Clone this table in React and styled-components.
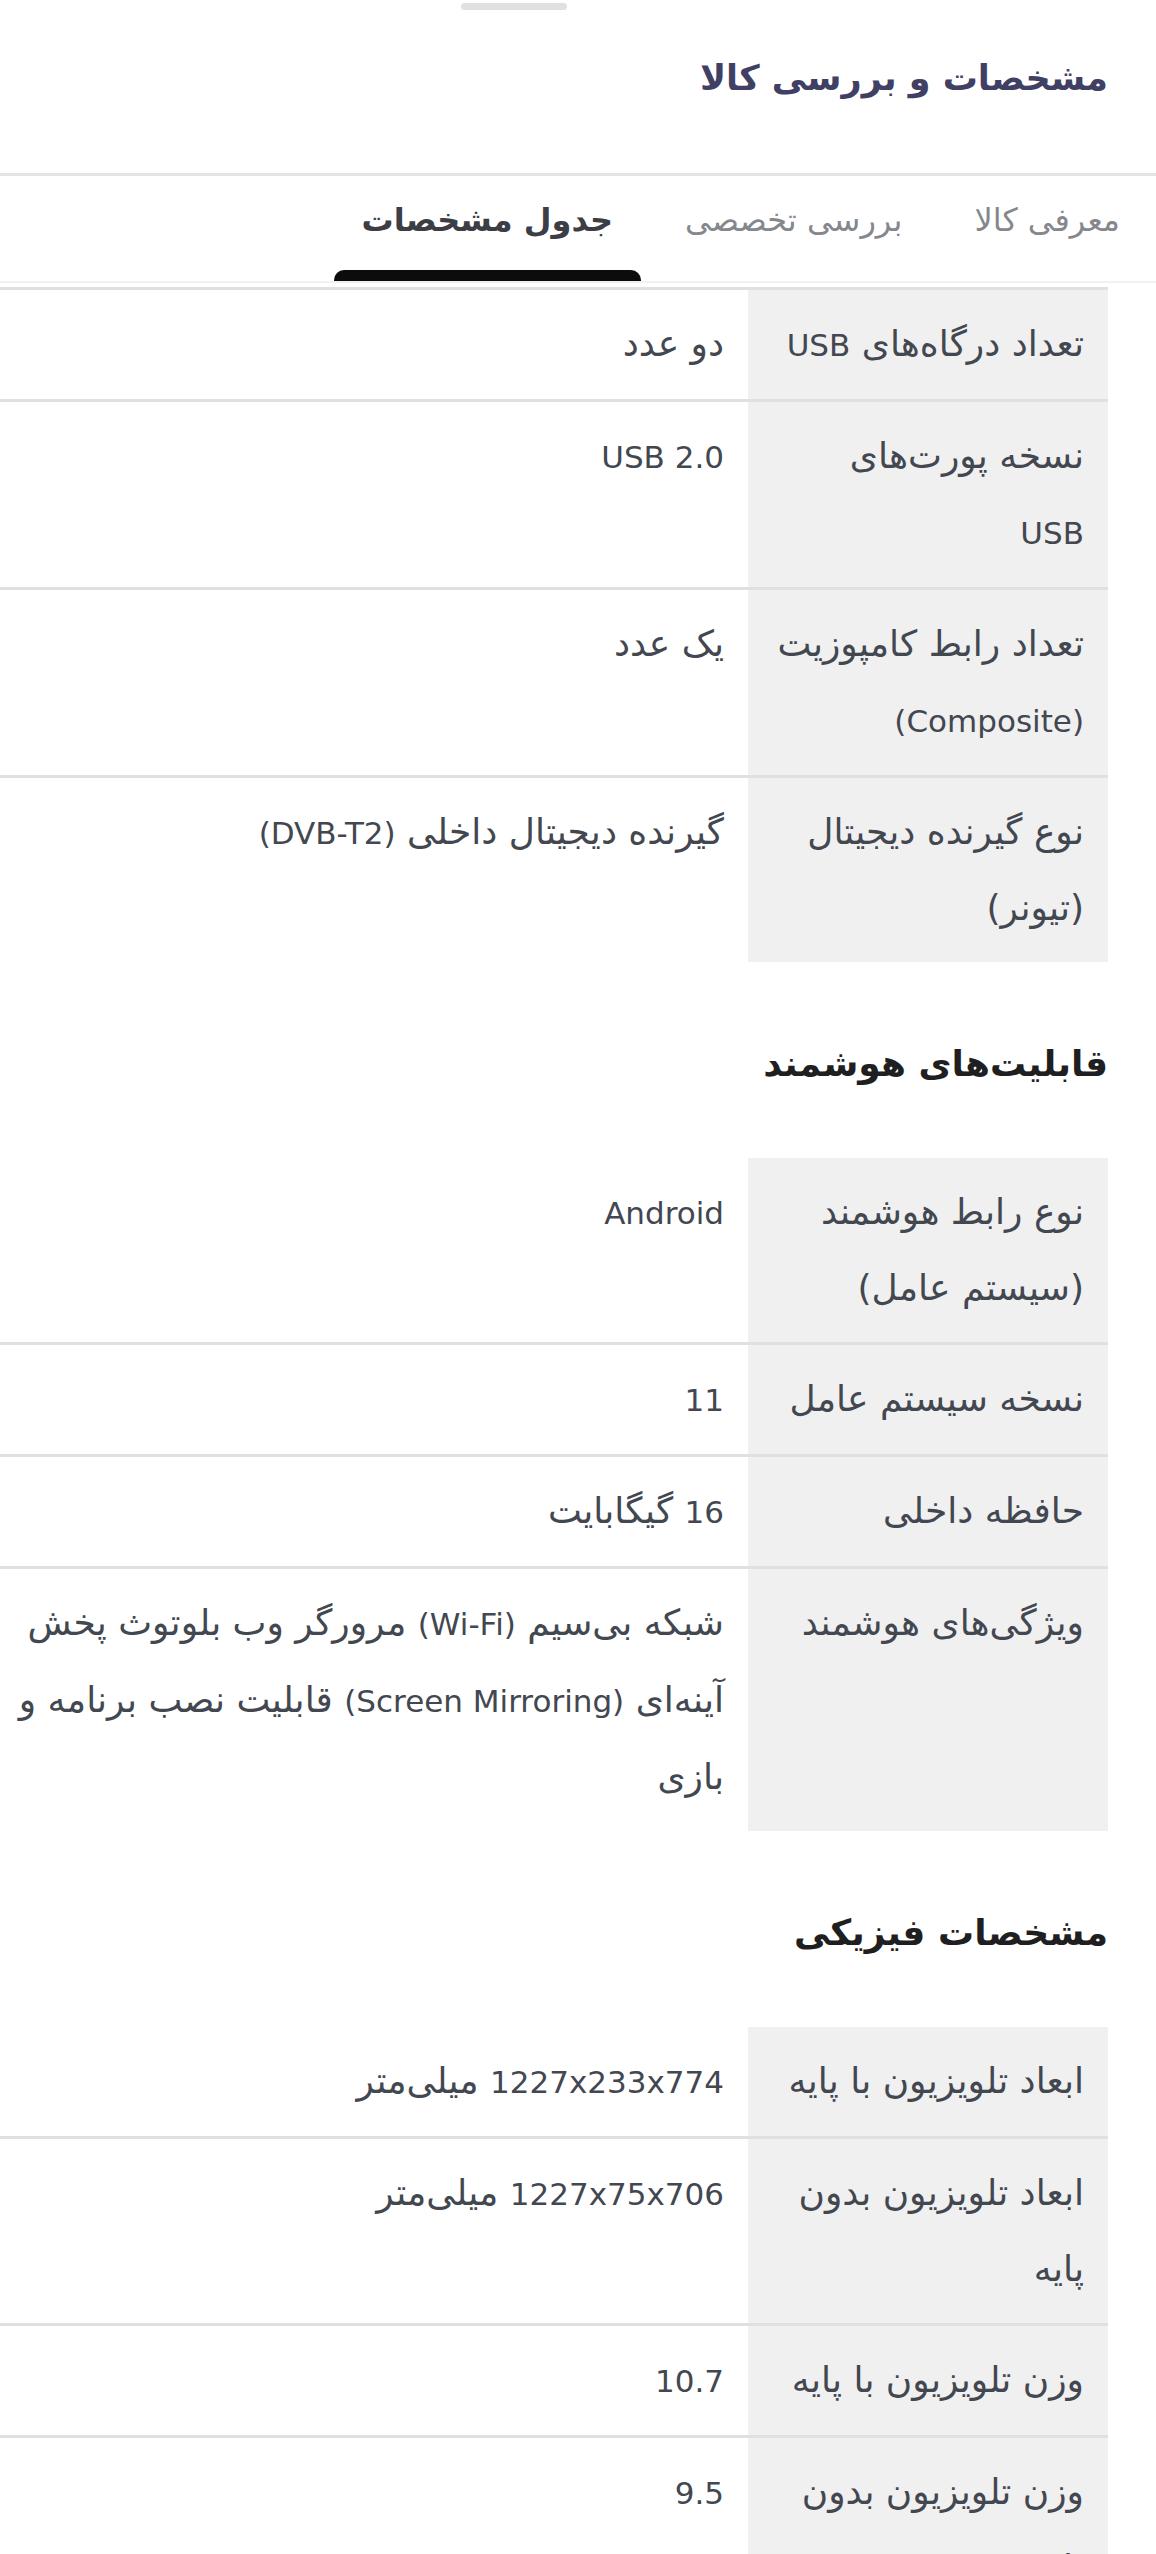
import styled, { createGlobalStyle } from "styled-components";

const GlobalStyle = createGlobalStyle`
  html,
  body {
    margin: 0;
    padding: 0;
    background: #ffffff;
    overflow-x: hidden;
  }
  body {
    font-family: "DejaVu Sans", "Noto Sans", sans-serif;
  }
`;

const Page = styled.div`
  direction: rtl;
  width: 100%;
`;

// the sheet is wider than the screen, it runs off on the left side
const Sheet = styled.div`
  width: 1284px;
  display: flex;
  flex-direction: column;
  background: #ffffff;
`;

const Handle = styled.div`
  align-self: center;
  width: 106px;
  height: 7px;
  margin-top: 3px;
  border-radius: 4px;
  background: #e0e0e2;
`;

const Title = styled.h2`
  margin: 30px 48px 57px;
  font-size: 35px;
  font-weight: 700;
  line-height: 76px;
  color: #3f4064;
`;

const TabBar = styled.div`
  display: flex;
  gap: 16px;
  padding-right: 8px;
  border-top: 3px solid #e4e4e6;
  border-bottom: 2px solid #f1f1f2;
`;

const Tab = styled.div`
  display: flex;
  flex-direction: column;
  padding-top: 22px;
  cursor: pointer;
`;

const TabLabel = styled.span`
  padding: 0 28px;
  font-size: 32px;
  line-height: 44px;
  white-space: nowrap;
  text-align: center;
  font-weight: ${(p) => (p.$active ? 700 : 400)};
  color: ${(p) => (p.$active ? "#3c3d45" : "#84878c")};
`;

const Indicator = styled.span`
  margin-top: 28px;
  height: 11px;
  border-radius: 10px 10px 0 0;
  background: ${(p) => (p.$active ? "#0c0c0c" : "transparent")};
`;

const Section = styled.section`
  padding: ${(p) => (p.$first ? "4px 48px 0" : "0 48px")};
`;

const SectionTitle = styled.h3`
  margin: 64px 0 56px;
  font-size: 36px;
  font-weight: 700;
  line-height: 76px;
  color: #1f1f22;
`;

const Row = styled.div`
  display: grid;
  grid-template-columns: 360px 1fr;
  border-top: ${(p) => (p.$border ? "3px solid #e0e0e2" : "none")};
`;

const Cell = styled.div`
  padding: 16px 24px;
  font-size: 36px;
  line-height: 76px;
  color: #424750;
  background: ${(p) => (p.$label ? "#f0f0f1" : "transparent")};
`;

const Line = styled.span`
  display: block;
  white-space: nowrap;
`;

// latin words and numbers are set a bit smaller than the persian text
const Latin = styled.span`
  font-size: 31px;
`;

const latinRun = /(\(?[A-Za-z0-9](?:[A-Za-z0-9.\- ]*[A-Za-z0-9])?\)?)/;

function Text({ children }) {
  return children
    .split(latinRun)
    .map((part, i) =>
      i % 2 ? <Latin key={i}>{part}</Latin> : part
    );
}

function Lines({ lines }) {
  const list = Array.isArray(lines) ? lines : [lines];
  return list.map((l, i) => (
    <Line key={i}>
      <Text>{l}</Text>
    </Line>
  ));
}

const tabs = [
  { title: "معرفی کالا" },
  { title: "بررسی تخصصی" },
  { title: "جدول مشخصات", active: true },
];

const sections = [
  {
    continued: true,
    rows: [
      ["تعداد درگاه‌های USB", "دو عدد"],
      [["نسخه پورت‌های", "USB"], "USB 2.0"],
      [["تعداد رابط کامپوزیت", "(Composite)"], "یک عدد"],
      [["نوع گیرنده دیجیتال", "(تیونر)"], "گیرنده دیجیتال داخلی (DVB-T2)"],
    ],
  },
  {
    title: "قابلیت‌های هوشمند",
    rows: [
      [["نوع رابط هوشمند", "(سیستم عامل)"], "Android"],
      ["نسخه سیستم عامل", "11"],
      ["حافظه داخلی", "16 گیگابایت"],
      [
        "ویژگی‌های هوشمند",
        [
          "شبکه بی‌سیم (Wi-Fi) مرورگر وب بلوتوث پخش",
          "آینه‌ای (Screen Mirroring) قابلیت نصب برنامه و",
          "بازی",
        ],
      ],
    ],
  },
  {
    title: "مشخصات فیزیکی",
    rows: [
      ["ابعاد تلویزیون با پایه", "1227x233x774 میلی‌متر"],
      [["ابعاد تلویزیون بدون", "پایه"], "1227x75x706 میلی‌متر"],
      ["وزن تلویزیون با پایه", "10.7"],
      [["وزن تلویزیون بدون", "پایه"], "9.5"],
    ],
  },
];

function SpecSection({ section, first }) {
  return (
    <Section $first={first}>
      {section.title && <SectionTitle>{section.title}</SectionTitle>}
      {section.rows.map(([label, value], i) => (
        <Row key={i} $border={i > 0 || section.continued}>
          <Cell $label>
            <Lines lines={label} />
          </Cell>
          <Cell>
            <Lines lines={value} />
          </Cell>
        </Row>
      ))}
    </Section>
  );
}

export default function App() {
  return (
    <Page>
      <GlobalStyle />
      <Sheet>
        <Handle />
        <Title>مشخصات و بررسی کالا</Title>
        <TabBar>
          {tabs.map((t) => (
            <Tab key={t.title}>
              <TabLabel $active={t.active}>{t.title}</TabLabel>
              <Indicator $active={t.active} />
            </Tab>
          ))}
        </TabBar>
        {sections.map((s, i) => (
          <SpecSection key={i} section={s} first={i === 0} />
        ))}
      </Sheet>
    </Page>
  );
}
